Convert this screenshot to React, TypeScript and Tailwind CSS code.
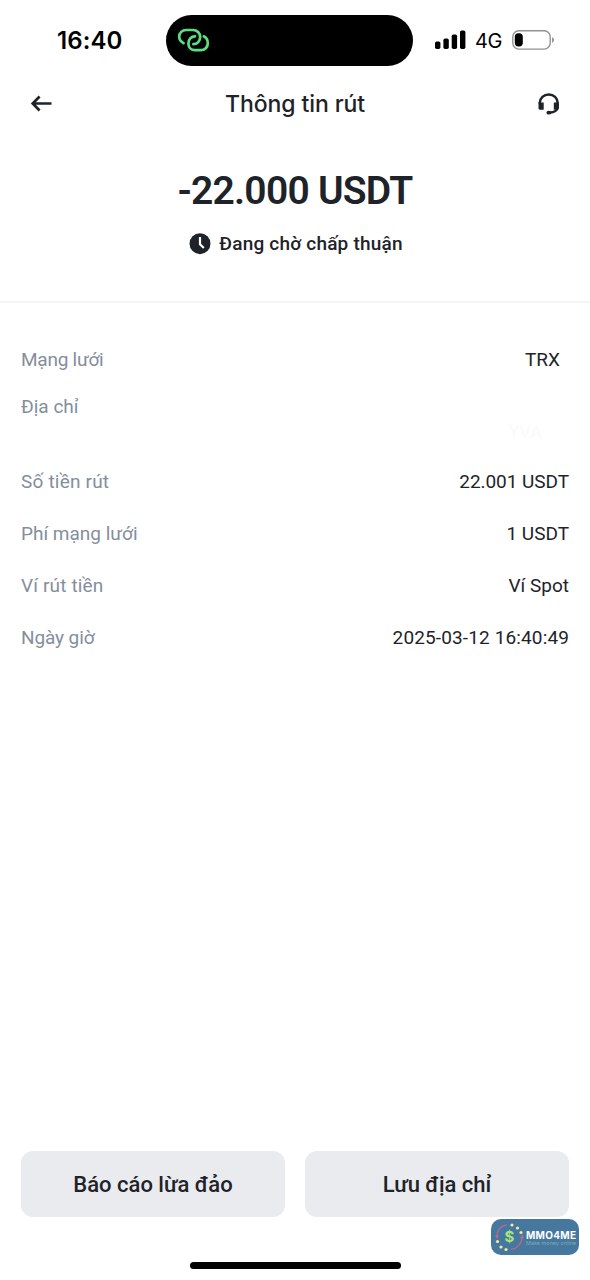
import React from "react";
import clsx from "clsx";

interface DetailRowProps {
  label: string;
  value: string;
  labelClass?: string;
  valueClass?: string;
  rowClass?: string;
}

const StatusBar = () => {
  return (
    <div className="flex h-[66px] items-start">
      <div className="mt-[26px] ml-[57px] w-[109px] font-['Inter',sans-serif] text-[24px] leading-[30px] font-semibold tracking-[0.1px] text-black">
        16:40
      </div>
      <div className="mt-[15px] h-[51px] w-[247px] rounded-full bg-black">
        <svg className="mt-[12px] ml-[10px] h-7 w-9" viewBox="0 0 36 28" fill="none">
          <g stroke="#5cde80" strokeWidth="2.7" strokeLinecap="round">
            <path d="M7.6 16.2C4.8 14.8 3.2 12.3 3.2 9.6C3.2 5.8 6.2 3 10.2 3H17C21 3 24.2 6 24.2 10C24.2 14 21.3 17.2 17.4 17.2" />
            <path d="M27.8 9.3C30.3 10.6 31.8 13.2 31.8 16.2C31.8 20.2 28.8 23.2 24.8 23.2H19C15.2 23.2 12.4 20.3 12.4 16.4C12.4 12.4 15.2 9.3 19 9.3" />
          </g>
        </svg>
      </div>
      <div className="mt-[30px] ml-[22px] flex h-5 items-center">
        <svg className="h-5 w-[31px]" viewBox="0 0 31 20" fill="#000">
          <rect x="0" y="11.5" width="5.4" height="7.5" rx="1.7" />
          <rect x="8.4" y="8.5" width="5.4" height="10.5" rx="1.7" />
          <rect x="16.7" y="4.5" width="5.4" height="14.5" rx="1.7" />
          <rect x="25" y="0.5" width="5.4" height="18.5" rx="1.7" />
        </svg>
        <span className="mt-px ml-[9px] w-[37px] font-['Inter',sans-serif] text-[20px] leading-5 tracking-[-0.4px] text-black">
          4G
        </span>
        <svg className="h-5 w-[43px]" viewBox="0 0 43 20" fill="none">
          <rect x="0.8" y="0.7" width="37.4" height="18.4" rx="6" stroke="#929292" strokeWidth="1.4" />
          <rect x="2.8" y="3.2" width="8" height="13.2" rx="3.6" fill="#000" />
          <path d="M40 7.3C42.6 8.2 42.6 11.8 40 12.7Z" fill="#929292" />
        </svg>
      </div>
    </div>
  );
};

const Header = () => {
  return (
    <div className="flex h-[76px] items-center justify-between px-[29px] text-[#1e2329]">
      <svg className="h-6 w-6" viewBox="0 0 24 24" fill="none" stroke="currentColor" strokeWidth="2.7">
        <path d="M22.5 11.5H3.8M10.6 4.5L3.7 11.5L10.6 18.5" />
      </svg>
      <h1 className="font-['Inter',sans-serif] text-[23px] leading-[30px] font-medium tracking-[-0.1px]">
        Thông tin rút
      </h1>
      <svg className="h-6 w-6" viewBox="0 0 24 24" fill="none">
        <path d="M2.8 12V10.8C2.8 6 6.8 2.4 11.8 2.4C16.8 2.4 20.6 6 20.6 10.8V14.8C20.6 18.4 17.2 20.6 12.4 20.7" stroke="currentColor" strokeWidth="2.5" />
        <path d="M1.5 10.5H6.7V17.7H2.9C2.1 17.7 1.5 17.1 1.5 16.3ZM16.8 10.5H21.9V16.3C21.9 17.1 21.3 17.7 20.5 17.7H16.8Z" fill="currentColor" />
        <ellipse cx="11.8" cy="20.7" rx="2.4" ry="1.9" fill="currentColor" />
      </svg>
    </div>
  );
};

const DetailRow = ({ label, value, labelClass, valueClass, rowClass }: DetailRowProps) => {
  return (
    <div className={clsx("flex items-center justify-between text-[19px] leading-6", rowClass)}>
      <span className={clsx("text-[#848e9c]", labelClass)}>{label}</span>
      <span className={clsx("text-[#1e2329]", valueClass)}>{value}</span>
    </div>
  );
};

const Watermark = () => {
  return (
    <div className="absolute top-[1219px] left-[491px] flex h-9 w-[88px] items-center rounded-[10px] bg-[#46789f]">
      <svg className="ml-[3px] h-8 w-[31px] shrink-0" viewBox="0 0 31 32">
        <g fill="none" stroke="#c5668b" strokeWidth="1.1">
          <path d="M2.7 16C2.6 9.5 7 4.5 13 3.7" />
          <path d="M28 16C28 22.5 23.5 27.5 17 28.2" />
        </g>
        <path d="M1 14.5H5L2.8 18ZM26 17L28.2 13.5L30 17Z" fill="#c5668b" />
        <g fill="#f2eb91">
          <circle cx="18" cy="4" r="1.6" />
          <circle cx="23.5" cy="7" r="1.6" />
          <circle cx="27" cy="11.5" r="1.6" />
          <circle cx="3.5" cy="20.5" r="1.6" />
          <circle cx="7" cy="26" r="1.6" />
          <circle cx="12" cy="28.5" r="1.6" />
        </g>
        <text x="15.3" y="21.4" textAnchor="middle" fill="#a8e57a" fontFamily="Inter, sans-serif" fontSize="15" fontWeight="700">
          $
        </text>
      </svg>
      <div className="ml-px pt-0.5 font-['Inter',sans-serif] whitespace-nowrap">
        <div className="text-[10px] leading-[10px] font-bold tracking-[0.3px] text-white">MMO4ME</div>
        <div className="text-[5.3px] leading-[6px] tracking-[0.1px] text-[#79afb9]">Make money online</div>
      </div>
    </div>
  );
};

export default function App() {
  return (
    <div className="relative flex h-[1280px] w-[590px] flex-col overflow-hidden bg-white font-['Roboto',sans-serif]">
      <StatusBar />
      <Header />

      <section className="flex h-[161px] flex-col items-center border-b-2 border-[#f4f5f6] text-[#1e2329]">
        <div className="mt-[25px] text-[39px] leading-[48px] font-semibold tracking-[-0.75px] whitespace-nowrap">
          -22.000 USDT
        </div>
        <div className="mt-[17px] ml-[2px] flex items-center">
          <svg className="h-[22px] w-[22px]" viewBox="0 0 22 22">
            <circle cx="11" cy="10.7" r="10.5" fill="currentColor" />
            <path d="M11 4V11.2L14.8 15" fill="none" stroke="#fff" strokeWidth="2.2" />
          </svg>
          <span className="ml-[8px] text-[19px] leading-6 font-medium tracking-[0.2px] whitespace-nowrap">
            Đang chờ chấp thuận
          </span>
        </div>
      </section>

      <section className="flex flex-col px-[21px] pt-[45px]">
        <DetailRow label="Mạng lưới" value="TRX" labelClass="tracking-[-0.25px]" valueClass="mr-[9px]" />
        <div className="mt-[23px] flex h-[52px] justify-between text-[19px] leading-6">
          <span className="text-[#848e9c]">Địa chỉ</span>
          <span className="mt-[25px] mr-[27px] text-[18px] text-[#fafafa]">YVA</span>
        </div>
        <DetailRow label="Số tiền rút" value="22.001 USDT" labelClass="tracking-[0.2px]" valueClass="tracking-[-0.05px]" rowClass="mt-[23px]" />
        <DetailRow label="Phí mạng lưới" value="1 USDT" rowClass="mt-7" />
        <DetailRow label="Ví rút tiền" value="Ví Spot" labelClass="tracking-[0.15px]" rowClass="mt-7" />
        <DetailRow label="Ngày giờ" value="2025-03-12 16:40:49" labelClass="tracking-[-0.1px]" valueClass="tracking-[0.13px]" rowClass="mt-7" />
      </section>

      <div className="mt-auto flex gap-5 px-[21px] text-[22px] font-medium text-[#1e2329]">
        <button type="button" className="h-[66px] flex-1 rounded-xl bg-[#eaebef]">
          Báo cáo lừa đảo
        </button>
        <button type="button" className="h-[66px] flex-1 rounded-xl bg-[#eaebef]">
          Lưu địa chỉ
        </button>
      </div>
      <div className="mx-auto mt-[45px] mb-[11px] h-[7px] w-[211px] shrink-0 rounded-full bg-black" />

      <Watermark />
    </div>
  );
}
